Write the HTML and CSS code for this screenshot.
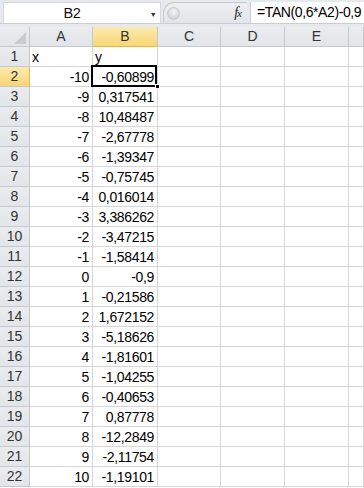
FILE: index.html
```html
<!DOCTYPE html>
<html lang="en">
<head>
  <meta charset="UTF-8">
  <title>Book1 - Sheet1</title>
  <link rel="stylesheet" href="styles.css">
</head>
<body>
  <div class="formula-bar">
    <div class="name-box">
      <span class="name-text">B2</span>
      <span class="name-drop">&#9660;</span>
    </div>
    <div class="fx-group">
      <span class="fx-knob"></span>
      <span class="fx"><i>f</i><i class="fx-x">x</i></span>
    </div>
    <div class="formula-input">=TAN(0,6*A2)-0,9</div>
  </div>
  <div class="bar-gap"></div>

  <div class="sheet">
    <div class="row">
      <div class="hdr corner"><span class="tri"></span></div>
      <div class="hdr col">A</div>
      <div class="hdr col active">B</div>
      <div class="hdr col">C</div>
      <div class="hdr col">D</div>
      <div class="hdr col">E</div>
      <div class="hdr col"></div>
    </div>
    <div class="row">
      <div class="hdr rownum">1</div>
      <div class="cell txt">x</div>
      <div class="cell txt">y</div>
      <div class="cell"></div><div class="cell"></div><div class="cell"></div><div class="cell"></div>
    </div>
    <div class="row">
      <div class="hdr rownum active">2</div>
      <div class="cell">-10</div>
      <div class="cell selected">-0,60899<span class="handle"></span></div>
      <div class="cell"></div><div class="cell"></div><div class="cell"></div><div class="cell"></div>
    </div>
    <div class="row">
      <div class="hdr rownum">3</div><div class="cell">-9</div><div class="cell">0,317541</div>
      <div class="cell"></div><div class="cell"></div><div class="cell"></div><div class="cell"></div>
    </div>
    <div class="row">
      <div class="hdr rownum">4</div><div class="cell">-8</div><div class="cell">10,48487</div>
      <div class="cell"></div><div class="cell"></div><div class="cell"></div><div class="cell"></div>
    </div>
    <div class="row">
      <div class="hdr rownum">5</div><div class="cell">-7</div><div class="cell">-2,67778</div>
      <div class="cell"></div><div class="cell"></div><div class="cell"></div><div class="cell"></div>
    </div>
    <div class="row">
      <div class="hdr rownum">6</div><div class="cell">-6</div><div class="cell">-1,39347</div>
      <div class="cell"></div><div class="cell"></div><div class="cell"></div><div class="cell"></div>
    </div>
    <div class="row">
      <div class="hdr rownum">7</div><div class="cell">-5</div><div class="cell">-0,75745</div>
      <div class="cell"></div><div class="cell"></div><div class="cell"></div><div class="cell"></div>
    </div>
    <div class="row">
      <div class="hdr rownum">8</div><div class="cell">-4</div><div class="cell">0,016014</div>
      <div class="cell"></div><div class="cell"></div><div class="cell"></div><div class="cell"></div>
    </div>
    <div class="row">
      <div class="hdr rownum">9</div><div class="cell">-3</div><div class="cell">3,386262</div>
      <div class="cell"></div><div class="cell"></div><div class="cell"></div><div class="cell"></div>
    </div>
    <div class="row">
      <div class="hdr rownum">10</div><div class="cell">-2</div><div class="cell">-3,47215</div>
      <div class="cell"></div><div class="cell"></div><div class="cell"></div><div class="cell"></div>
    </div>
    <div class="row">
      <div class="hdr rownum">11</div><div class="cell">-1</div><div class="cell">-1,58414</div>
      <div class="cell"></div><div class="cell"></div><div class="cell"></div><div class="cell"></div>
    </div>
    <div class="row">
      <div class="hdr rownum">12</div><div class="cell">0</div><div class="cell">-0,9</div>
      <div class="cell"></div><div class="cell"></div><div class="cell"></div><div class="cell"></div>
    </div>
    <div class="row">
      <div class="hdr rownum">13</div><div class="cell">1</div><div class="cell">-0,21586</div>
      <div class="cell"></div><div class="cell"></div><div class="cell"></div><div class="cell"></div>
    </div>
    <div class="row">
      <div class="hdr rownum">14</div><div class="cell">2</div><div class="cell">1,672152</div>
      <div class="cell"></div><div class="cell"></div><div class="cell"></div><div class="cell"></div>
    </div>
    <div class="row">
      <div class="hdr rownum">15</div><div class="cell">3</div><div class="cell">-5,18626</div>
      <div class="cell"></div><div class="cell"></div><div class="cell"></div><div class="cell"></div>
    </div>
    <div class="row">
      <div class="hdr rownum">16</div><div class="cell">4</div><div class="cell">-1,81601</div>
      <div class="cell"></div><div class="cell"></div><div class="cell"></div><div class="cell"></div>
    </div>
    <div class="row">
      <div class="hdr rownum">17</div><div class="cell">5</div><div class="cell">-1,04255</div>
      <div class="cell"></div><div class="cell"></div><div class="cell"></div><div class="cell"></div>
    </div>
    <div class="row">
      <div class="hdr rownum">18</div><div class="cell">6</div><div class="cell">-0,40653</div>
      <div class="cell"></div><div class="cell"></div><div class="cell"></div><div class="cell"></div>
    </div>
    <div class="row">
      <div class="hdr rownum">19</div><div class="cell">7</div><div class="cell">0,87778</div>
      <div class="cell"></div><div class="cell"></div><div class="cell"></div><div class="cell"></div>
    </div>
    <div class="row">
      <div class="hdr rownum">20</div><div class="cell">8</div><div class="cell">-12,2849</div>
      <div class="cell"></div><div class="cell"></div><div class="cell"></div><div class="cell"></div>
    </div>
    <div class="row">
      <div class="hdr rownum">21</div><div class="cell">9</div><div class="cell">-2,11754</div>
      <div class="cell"></div><div class="cell"></div><div class="cell"></div><div class="cell"></div>
    </div>
    <div class="row">
      <div class="hdr rownum">22</div><div class="cell">10</div><div class="cell">-1,19101</div>
      <div class="cell"></div><div class="cell"></div><div class="cell"></div><div class="cell"></div>
    </div>
  </div>
</body>
</html>
```

FILE: styles.css
```css
* {
  margin: 0;
  padding: 0;
  box-sizing: border-box;
}

body {
  font-family: 'Liberation Sans', Arial, sans-serif;
  font-size: 14px;
  letter-spacing: -0.35px;
  color: #000;
  background: #fff;
  overflow: hidden;
}

/* formula bar */
.formula-bar {
  display: flex;
  height: 24px;
  padding: 2px 0 0 3px;
  background: #e6e9ed;
  border-bottom: 1px solid #c9cdd2;
}

.name-box {
  width: 158px;
  height: 21px;
  background: #fff;
  border: 1px solid #d3d7dc;
  border-bottom: none;
  display: flex;
  align-items: center;
}

.name-text {
  flex: 1;
  text-align: center;
  padding-left: 4px;
  padding-right: 10px;
  font-size: 14.5px;
  color: #111;
}

.name-drop {
  font-size: 7px;
  color: #333;
  width: 14px;
  text-align: center;
  padding-top: 2px;
}

.fx-group {
  width: 84px;
  height: 21px;
  margin-left: 2px;
  border: 1px solid #c3c8ce;
  border-right: none;
  border-bottom: none;
  border-radius: 11px 0 0 0;
  background: linear-gradient(#eef0f3, #e1e4e8);
  display: flex;
  align-items: center;
  justify-content: space-between;
  padding: 0 5px 0 3px;
}

.fx-knob {
  width: 13px;
  height: 13px;
  border-radius: 50%;
  background: radial-gradient(circle at 50% 35%, #f4f5f6, #c5c8cc);
  border: 1px solid #c6c9cd;
}

.fx {
  font-family: 'Liberation Serif', 'Times New Roman', serif;
  font-size: 14px;
  letter-spacing: 0;
  color: #222;
}

.fx-x {
  font-size: 11px;
  margin-left: -1px;
}

.formula-input {
  flex: 1;
  height: 21px;
  margin-left: 3px;
  background: #fff;
  border-left: 1px solid #c9cdd2;
  padding: 2px 0 0 6px;
  font-size: 14px;
  letter-spacing: -0.4px;
  color: #000;
  white-space: nowrap;
}

.bar-gap {
  height: 3px;
  background: #e6e9ed;
  border-bottom: 1px solid #e6e9ed;
}

/* grid */
.row {
  display: grid;
  grid-template-columns: 30px 63px 65px 63px 64px 64px 1fr;
  height: 20px;
}

.cell {
  border-right: 1px solid #d6d6d6;
  border-bottom: 1px solid #d6d6d6;
  text-align: right;
  padding: 3px 3px 0 0;
  line-height: 15px;
  white-space: nowrap;
  position: relative;
}

.cell.txt {
  text-align: left;
  padding-left: 2px;
}

.hdr {
  background: linear-gradient(#eaecef, #e2e5e9);
  border-right: 1px solid #c5c9ce;
  border-bottom: 1px solid #c5c9ce;
  color: #333;
  font-size: 14px;
  letter-spacing: 0;
  text-align: center;
  line-height: 19px;
}

.hdr.active {
  background: linear-gradient(#fbeab0, #f8d676);
}

.hdr.col.active {
  border-bottom: 1px solid #f0b53e;
}

.hdr.rownum.active {
  border-right: 1px solid #f0b53e;
}

.corner {
  display: flex;
  justify-content: flex-end;
  align-items: flex-end;
  padding: 0 3px 2px 0;
}

.tri {
  width: 12px;
  height: 12px;
  background: #c8ccd1;
  clip-path: polygon(100% 0, 100% 100%, 0 100%);
}

.cell.selected::after {
  content: '';
  position: absolute;
  top: -2px;
  left: -2px;
  right: 0;
  bottom: -1px;
  border: 2px solid #000;
  pointer-events: none;
}

.handle {
  position: absolute;
  right: -3px;
  bottom: -3px;
  width: 5px;
  height: 5px;
  background: #000;
  border: 1px solid #fff;
  z-index: 2;
}
```
